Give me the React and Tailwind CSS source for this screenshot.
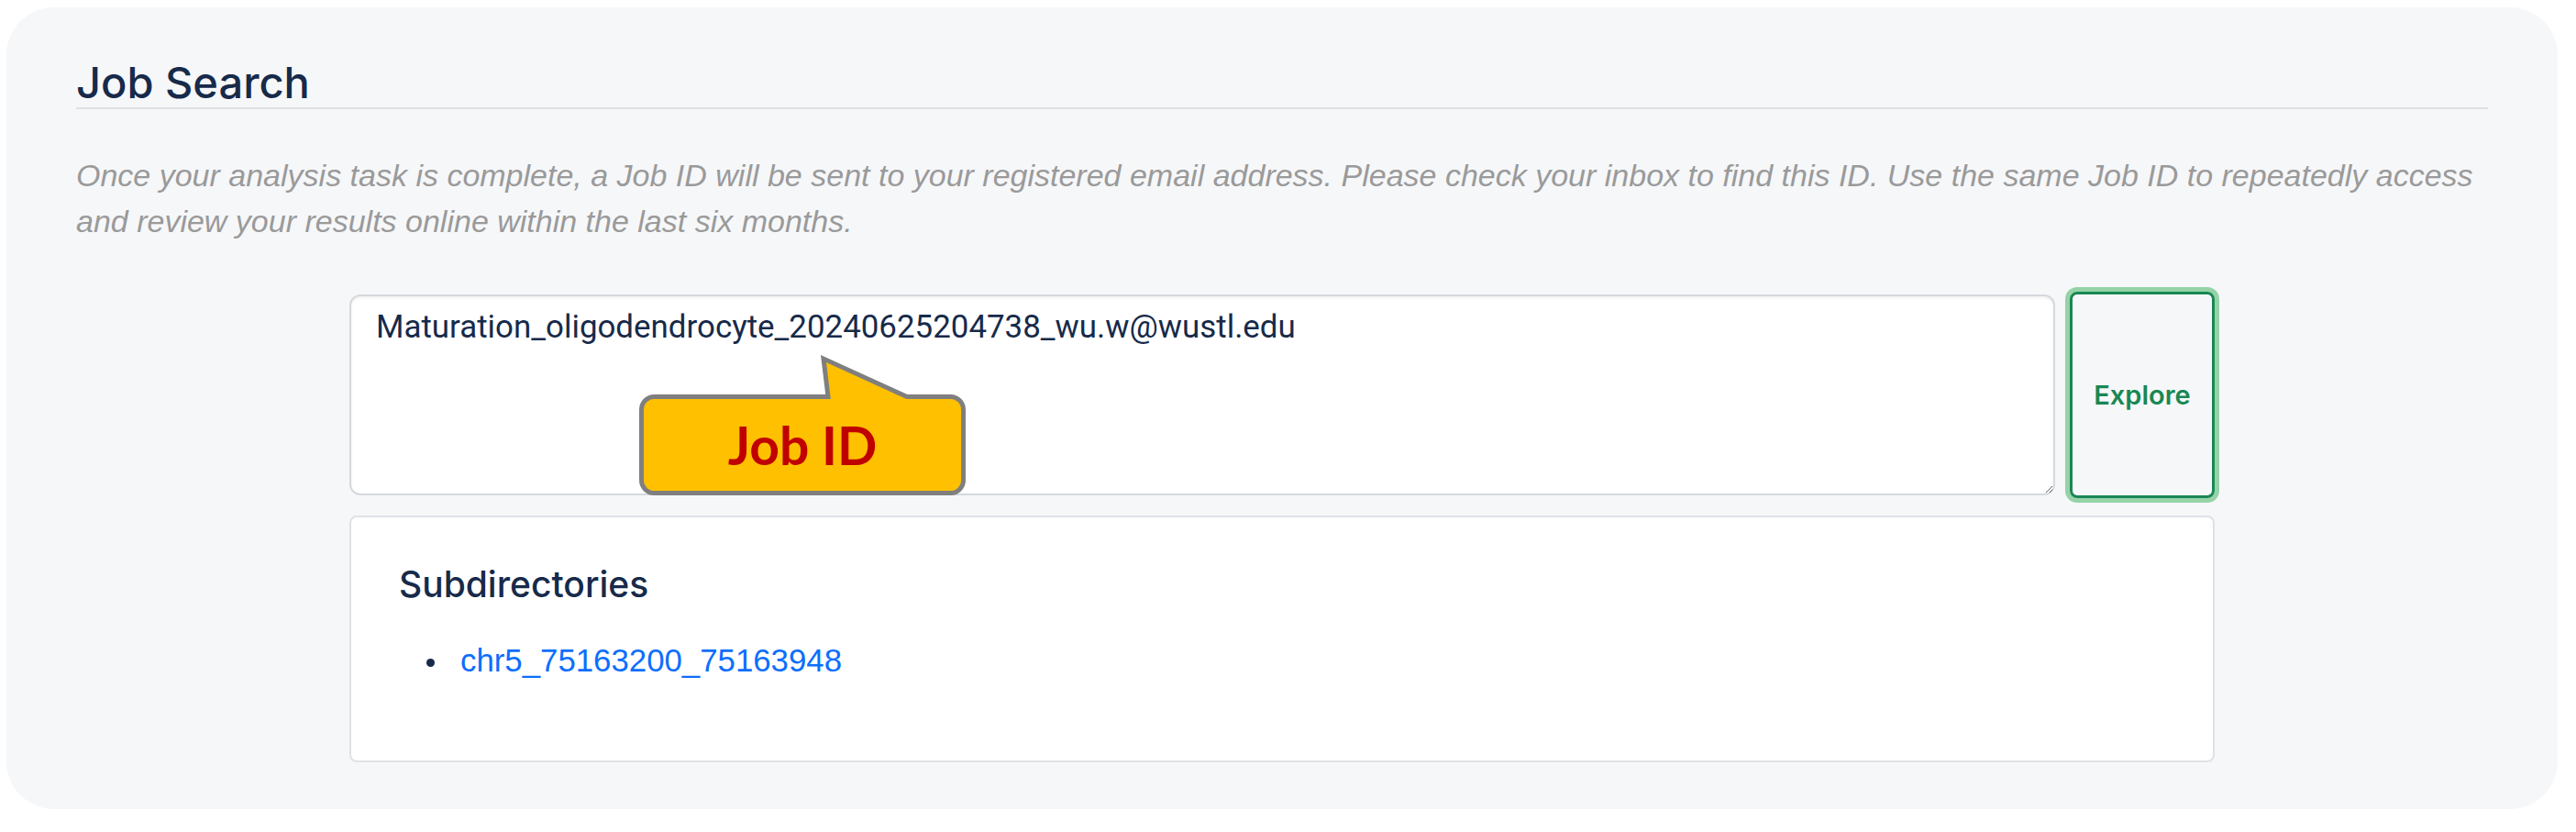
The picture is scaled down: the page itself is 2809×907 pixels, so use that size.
import React from "react";

function Callout() {
  return (
    <>
      <svg
        className="absolute left-[316px] top-[65px]"
        width="356"
        height="154"
        viewBox="0 0 356 154"
      >
        <path
          d="M 16.5 46.5 H 206 L 201 5 L 292 46.5 H 339.5 A 14 14 0 0 1 353.5 60.5 V 137.5 A 14 14 0 0 1 339.5 151.5 H 16.5 A 14 14 0 0 1 2.5 137.5 V 60.5 A 14 14 0 0 1 16.5 46.5 Z"
          fill="#ffc000"
          stroke="#7f7f7f"
          strokeWidth="5"
          strokeLinejoin="miter"
        />
      </svg>
      <div className="absolute left-[316px] top-[110px] w-[356px] h-[109px] flex items-center justify-center">
        <span className="font-['Lato',sans-serif] font-bold text-[57px] leading-none text-[#c00000]">
          Job ID
        </span>
      </div>
    </>
  );
}

export default function App() {
  return (
    <div className="w-[2809px] h-[907px] bg-white pl-[7px] pt-[8px]">
      <div className="w-[2782px] h-[874px] rounded-[52px] bg-[#f6f7f9] px-[76px] pt-[58px]">
        <h2 className="font-['Inter',sans-serif] font-medium text-[47px] leading-[48px] text-[#172a4a] pb-[3px] border-b-2 border-[#dfe0e3]">
          Job Search
        </h2>
        <p className="mt-[47px] font-['Liberation_Sans',Arial,sans-serif] italic text-[34px] leading-[50px] text-[#9a9a9a]">
          Once your analysis task is complete, a Job ID will be sent to your
          registered email address. Please check your inbox to find this ID.
          Use the same Job ID to repeatedly access and review your results
          online within the last six months.
        </p>
        <div className="mx-auto w-[2034px] mt-[52px]">
          <div className="flex items-center gap-[16px] h-[225px]">
            <div className="relative w-[1860px] h-[219px]">
              <textarea
                readOnly
                defaultValue="Maturation_oligodendrocyte_20240625204738_wu.w@wustl.edu"
                className="block w-full h-full resize bg-white border-2 border-[#d5d8dd] rounded-[12px] shadow-[inset_0_2px_3px_rgba(0,0,0,0.06)] pl-[27px] pr-[27px] pt-[8px] font-['Roboto',sans-serif] text-[34.9px] leading-[52px] text-[#172a4a] outline-none"
              />
              <Callout />
            </div>
            <button className="w-[158px] h-[225px] shrink-0 border-[3px] border-[#198754] rounded-[8px] ring-[5px] ring-[#95d3a7] bg-transparent font-['Inter',sans-serif] font-semibold text-[29px] text-[#198754]">
              Explore
            </button>
          </div>
          <div className="mt-[19px] h-[269px] border-2 border-[#dee2e6] rounded-[8px] bg-white pl-[52px] pt-[49px]">
            <h4 className="font-['Inter',sans-serif] font-medium text-[39px] leading-[47px] text-[#172a4a]">
              Subdirectories
            </h4>
            <div className="mt-[34px] flex items-center">
              <span className="ml-[30px] mt-[4px] w-[9px] h-[9px] rounded-full bg-[#172a4a]" />
              <a
                href="#"
                className="ml-[28px] font-['Liberation_Sans',Arial,sans-serif] text-[34.8px] leading-[52px] text-[#0d6efd]"
              >
                chr5_75163200_75163948
              </a>
            </div>
          </div>
        </div>
      </div>
    </div>
  );
}
